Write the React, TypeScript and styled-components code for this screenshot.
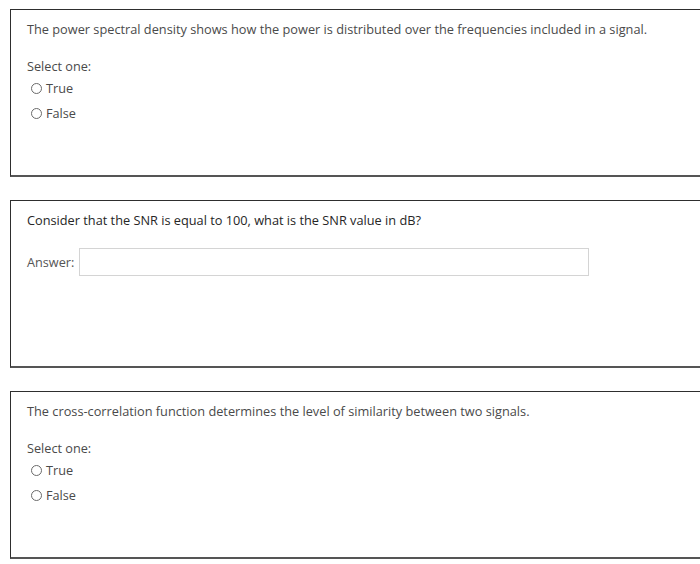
import React from "react";
import styled, { createGlobalStyle } from "styled-components";

const GlobalStyle = createGlobalStyle`
  html, body {
    margin: 0;
    padding: 0;
    background: #ffffff;
    overflow: hidden;
  }
  body {
    font-family: "Open Sans", "Liberation Sans", Arial, sans-serif;
  }
`;

type Choice = { question: string };

const App = () => {
  return (
    <Page>
      <GlobalStyle />
      <TrueFalse question="The power spectral density shows how the power is distributed over the frequencies included in a signal." />
      <QuestionBox>
        <Prompt $strong>Consider that the SNR is equal to 100, what is the SNR value in dB?</Prompt>
        <AnswerRow>
          <AnswerLabel>Answer:</AnswerLabel>
          <AnswerInput type="text" />
        </AnswerRow>
      </QuestionBox>
      <TrueFalse question="The cross-correlation function determines the level of similarity between two signals." />
    </Page>
  );
};

const TrueFalse = ({ question }: Choice) => (
  <QuestionBox>
    <Prompt>{question}</Prompt>
    <SelectLabel>Select one:</SelectLabel>
    <Options>
      {["True", "False"].map((o) => (
        <Option key={o}>
          <Radio />
          <span>{o}</span>
        </Option>
      ))}
    </Options>
  </QuestionBox>
);

export default App;

const Page = styled.div`
  display: flex;
  flex-direction: column;
  gap: 23px;
  padding: 9px 0 0 10px;
  width: 720px;
`;

const QuestionBox = styled.div`
  box-sizing: border-box;
  height: 168px;
  border: 1px solid #2e2e2e;
  border-bottom: 2px solid #555555;
  padding: 11px 0 0 16px;
  color: #4a4a4a;
  font-size: 12.7px;
  line-height: 17px;
`;

const Prompt = styled.div<{ $strong?: boolean }>`
  font-size: 12.75px;
  color: ${(p) => (p.$strong ? "#262626" : "#4a4a4a")};
`;

const SelectLabel = styled.div`
  margin-top: 20px;
`;

const Options = styled.div`
  display: flex;
  flex-direction: column;
  margin-top: 1px;
`;

const Option = styled.label`
  display: flex;
  align-items: center;
  height: 25px;
  padding-left: 4px;
  gap: 4px;
`;

const Radio = styled.span`
  box-sizing: border-box;
  width: 11px;
  height: 11px;
  border-radius: 50%;
  border: 1px solid #6a6a6a;
  background: #ffffff;
`;

const AnswerRow = styled.div`
  display: flex;
  align-items: center;
  gap: 5px;
  margin-top: 19px;
`;

const AnswerLabel = styled.span`
  color: #555555;
`;

const AnswerInput = styled.input`
  box-sizing: border-box;
  width: 510px;
  height: 28px;
  border: 1px solid #d4d4d4;
  background: #ffffff;
  outline: none;
  padding: 0 6px;
`;
